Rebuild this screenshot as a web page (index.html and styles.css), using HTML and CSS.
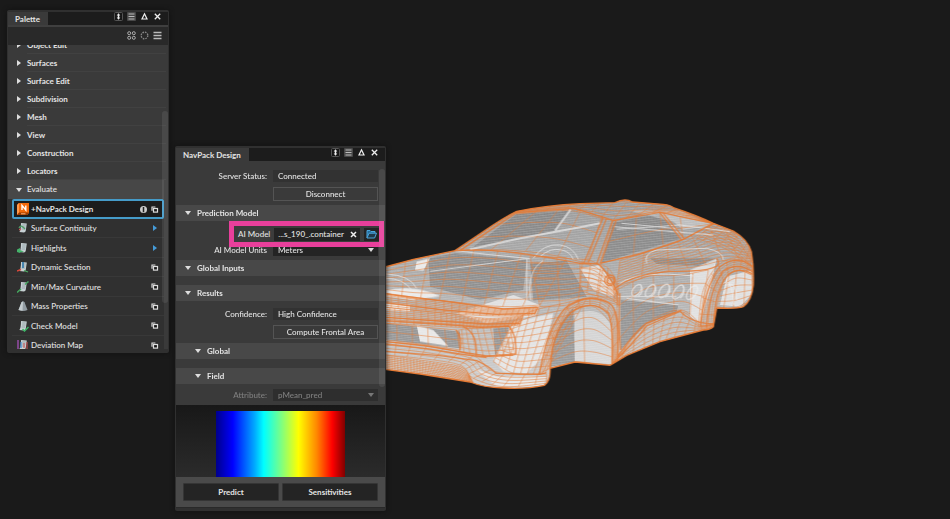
FILE: index.html
```
<!DOCTYPE html>
<html lang="en">
<head>
<meta charset="UTF-8">
<title>NavPack Design</title>
<link rel="stylesheet" href="styles.css">
</head>
<body>
<svg class="sprite" aria-hidden="true">
    <symbol id="i-pin" viewBox="0 0 9 9"><rect x=".5" y=".5" width="8" height="8" rx="1" fill="#171717" stroke="#555"/><path d="M4.5 1.2 6.3 3.6H5.2V5.4H6.3L4.5 7.8 2.7 5.4H3.8V3.6H2.7Z" fill="#eee"/></symbol>
    <symbol id="i-list" viewBox="0 0 9 9"><rect width="9" height="9" rx="1" fill="#484848"/><path d="M1.5 2h6M1.5 4.5h6M1.5 7h6" stroke="#bbb"/></symbol>
    <symbol id="i-up" viewBox="0 0 9 9"><path d="M4.5 1.8 7 7H2Z" fill="none" stroke="#eee" stroke-width="1.2"/></symbol>
    <symbol id="i-close" viewBox="0 0 9 9"><path d="M1.8 1.8 7.2 7.2M7.2 1.8 1.8 7.2" stroke="#eee" stroke-width="1.3"/></symbol>
    <symbol id="i-copy" viewBox="0 0 9 9"><path d="M5.4 2H2v3.8" fill="none" stroke="#ddd" stroke-width="1.2"/><rect x="3.5" y="3.5" width="4" height="3.6" fill="#171717" stroke="#ddd" stroke-width="1.2"/></symbol>
    <symbol id="i-page" viewBox="0 0 12 12"><path d="M4 1 9.8 1.4 8.8 8.5Q8.6 10.6 6.8 10.6L2.4 10Q4 7.500 4 1Z" fill="#c6d0d3"/><path d="M5.200 3h3.600M5 5h3.600M4.600 7h3.600" stroke="#8a9aa0" stroke-width=".8"/></symbol>
</svg>

<main class="viewport">
    <svg class="car" viewBox="0 0 1200 630" role="img" aria-label="Car model wireframe">
        <defs>
            <pattern id="fine" width="9" height="7" patternUnits="userSpaceOnUse" patternTransform="rotate(-6)">
                <path d="M0 1H9" stroke="#f4f4f4" stroke-width="1.600"/><path d="M1 0V7" stroke="#ddd" stroke-width=".8"/>
            </pattern>
            <linearGradient id="shell" x1="0" y1="0" x2="0" y2="1">
                <stop offset="0" stop-color="#989898"/><stop offset=".45" stop-color="#b0b0b0"/><stop offset="1" stop-color="#d4d4d4"/>
            </linearGradient>
            <clipPath id="outline"><path d="M15 231 100 208 225 182 310 125Q370 83 410 64 500 46 600 41L705 38Q735 22 757 36L850 43Q874 46 880 53 950 76 1000 100L1060 123Q1103 148 1114 185 1122 230 1120 285 1115 333 1090 350 1072 357 1010 354L1000 410Q990 419 970 420L840 455 740 496 690 526 585 516 510 535Q512 573 493 586 440 598 370 594 310 592 270 576L120 552 15 538Z"/></clipPath>
        </defs>
        <g clip-path="url(#outline)">
            <rect width="1200" height="630" fill="url(#shell)"/>
            <g class="dark">
                <path d="M145 205 225 190 440 208 430 300 300 330 150 290Z"/>
                <path d="M270 178 410 72 570 62 525 122Z"/>
                <path d="M450 220 560 212 620 320 460 332Z"/>
                <path d="M700 98 840 70 900 146 665 218Z"/>
                <path d="M18 400 240 425 240 475 18 450Z"/>
                <path d="M340 415 385 412 392 490 345 495Z"/>
                <path d="M512 530Q515 410 580 355L584 516Z"/>
                <path d="M722 330 895 345 890 365 800 402 722 480Z"/>
                <path d="M810 205 1010 205 1000 230 830 222Z"/>
            </g>
            <g class="light">
                <path d="M585 372Q670 340 697 420V522L585 514Z" opacity=".5"/>
                <path d="M105 240 110 215 150 205 130 242Z"/>
                <path d="M20 300Q110 285 180 318L100 330 18 318Z"/>
                <path d="M18 340 90 345 90 365 18 360Z"/>
                <path d="M110 405 160 420 205 468 120 455Z"/>
                <path d="M230 370 400 315 480 345 465 378 320 400Z" opacity=".8"/>
                <path d="M400 395 520 370 490 500 440 550 370 545 340 510Z" opacity=".8"/>
                <path d="M600 235 660 225 710 300 700 320 640 300Z" opacity=".8"/>
                <path d="M930 240 1010 205 990 300 960 400 930 380Z" opacity=".8"/>
                <path d="M1040 260 1115 240 1118 310 1080 350 1020 345Z" opacity=".8"/>
                <path d="M280 535 350 558 500 560 490 588 350 590Z" opacity=".8"/>
                <path d="M740 60 900 62 1000 105 910 120 880 95Z" opacity=".4"/>
            </g>
            <rect width="1200" height="630" fill="url(#fine)" opacity=".35"/>
            <g class="wires" id="wires"></g>
            <g class="ribs">
                <path d="M270 178 420 145 600 112 660 100M525 122 572 58" stroke-width="6"/>
                <path d="M225 182 330 194 450 206M150 244 440 206M440 205V330M452 330Q440 240 490 212"/>
                <path d="M460 205Q490 160 540 165 580 170 595 208M480 200Q510 172 545 180 570 185 580 208"/>
                <path d="M710 118 900 105 1050 125M725 100 890 116M700 110 1000 135"/>
                <path d="M800 220Q790 190 830 180L980 175Q1030 185 1030 210M720 280Q780 240 940 258M715 320H890M740 325 895 345"/>
                <path d="M18 252Q90 255 110 295M18 265Q70 265 95 300M1040 285Q1070 270 1070 330M1030 280Q1055 260 1062 345"/>
                <g stroke-width="4">
                    <ellipse cx="770" cy="301" rx="11" ry="20" transform="rotate(35 770 301)"/>
                    <ellipse cx="811" cy="302" rx="11" ry="21" transform="rotate(35 811 302)"/>
                    <ellipse cx="852" cy="303" rx="12" ry="23" transform="rotate(35 852 303)"/>
                    <ellipse cx="895" cy="306" rx="12" ry="24" transform="rotate(35 895 306)"/>
                    <ellipse cx="936" cy="308" rx="12" ry="24" transform="rotate(35 936 308)"/>
                    <path d="M782 284Q795 305 774 320M823 284Q835 305 814 320M866 285Q878 305 855 322M908 287Q920 308 900 325"/>
                </g>
            </g>
            <g class="seams">
                <path d="M225 182Q340 176 450 194T600 220L655 222Q690 250 715 315"/>
                <path d="M240 182 410 68 580 55 665 80 700 92 840 67 1000 100"/>
                <path d="M670 82 612 218M680 85 625 218M698 90 650 222M708 93 662 220"/>
                <path d="M838 66 905 150M848 68 913 146M660 220 780 192 910 148 1000 100"/>
                <path d="M18 312 190 333 370 357 475 352 465 370 350 373 190 360 18 338"/>
                <path d="M18 382 180 393 320 402 420 400M18 392 180 402 310 412"/>
                <path d="M18 455 140 468 240 485 320 498 400 495M18 462 140 476 240 492 320 503"/>
                <path d="M18 484 180 497 290 512Q330 530 348 550L480 553 500 548"/>
                <path d="M228 420Q250 445 240 480M250 410Q295 430 288 498M300 412 385 408Q410 430 408 492L300 500"/>
                <path d="M478 552Q500 420 555 355 630 300 695 345 722 380 712 512M510 535Q515 430 575 365 640 325 685 370 700 400 697 522"/>
                <path d="M962 408Q975 290 1020 230 1070 192 1118 230M980 410Q988 300 1030 243 1070 215 1118 245M1000 408Q1005 300 1045 253 1080 230 1117 252"/>
                <path d="M700 518Q760 460 800 408L900 364Q935 400 1000 402M712 500Q760 430 798 400L905 360"/>
                <path d="M720 310Q715 400 722 480M700 300Q760 245 900 244T1010 205"/>
                <circle cx="690" cy="271" r="16"/><circle cx="692" cy="272" r="10"/>
            </g>
        </g>
        <path class="edge" d="M15 231 100 208 225 182 310 125Q370 83 410 64 500 46 600 41L705 38Q735 22 757 36L850 43Q874 46 880 53 950 76 1000 100L1060 123Q1103 148 1114 185 1122 230 1120 285 1115 333 1090 350 1072 357 1010 354L1000 410Q990 419 970 420L840 455 740 496 690 526 585 516 510 535Q512 573 493 586 440 598 370 594 310 592 270 576L120 552 15 538"/>
    </svg>

    <section class="window palette">
        <header class="titlebar">
            <h2 class="tab">Palette</h2>
            <div class="controls">
                <button type="button" aria-label="Dock"><svg><use href="#i-pin"/></svg></button>
                <button type="button" aria-label="Menu"><svg><use href="#i-list"/></svg></button>
                <button type="button" aria-label="Collapse"><svg><use href="#i-up"/></svg></button>
                <button type="button" aria-label="Close"><svg><use href="#i-close"/></svg></button>
            </div>
        </header>
        <div class="toolbar">
            <button type="button" aria-label="Icon view"><svg viewBox="0 0 9 9" fill="none" stroke="#bbb" stroke-width=".9"><circle cx="2.200" cy="2.200" r="1.500"/><circle cx="6.800" cy="2.200" r="1.500"/><circle cx="2.200" cy="6.800" r="1.500"/><circle cx="6.800" cy="6.800" r="1.500"/></svg></button>
            <button type="button" aria-label="Ring view"><svg viewBox="0 0 9 9"><circle cx="4.500" cy="4.500" r="3.300" fill="none" stroke="#888" stroke-width="1.300" stroke-dasharray="1.600 1"/></svg></button>
            <button type="button" aria-label="List view"><svg viewBox="0 0 9 9"><path d="M.5 1.500h8M.5 4.500h8M.5 7.500h8" stroke="#bbb" stroke-width="1.300"/></svg></button>
        </div>
        <div class="tree">
            <ul class="groups">
                <li>Object Edit</li>
                <li>Surfaces</li>
                <li>Surface Edit</li>
                <li>Subdivision</li>
                <li>Mesh</li>
                <li>View</li>
                <li>Construction</li>
                <li>Locators</li>
                <li class="open">Evaluate</li>
            </ul>
            <ul class="tools">
                <li class="selected">
                    <svg class="tool-icon" viewBox="0 0 12 12"><path d="M0 2 2 0H12V10L10 12H0Z" fill="#f26a0c"/><path d="M0 2 2 0V10L0 12Z" fill="#ff9a4d"/><path d="M2 9.500H12L10 12H0Z" fill="#9c3c00"/><path d="M5 7V2.400L8.800 7V2.400" fill="none" stroke="#fff" stroke-width="1.400"/><path d="M4 10.800h4.500" stroke="#ffb27a"/></svg>
                    <span>+NavPack Design</span>
                    <svg class="mark" viewBox="0 0 9 9"><circle cx="4.500" cy="4.500" r="3.500" fill="#ccc"/><path d="M4.500 2V7.200" stroke="#222" stroke-width="1.500"/></svg>
                    <svg class="mark"><use href="#i-copy"/></svg>
                </li>
                <li>
                    <svg class="tool-icon" viewBox="0 0 12 12"><use href="#i-page"/><path d="M2 6Q4 2 8 7" fill="none" stroke="#4f9c68" stroke-width="1.300"/><path d="M2 7.500h2" stroke="#c55" stroke-width="1.500"/></svg>
                    <span>Surface Continuity</span><i class="more"></i>
                </li>
                <li>
                    <svg class="tool-icon" viewBox="0 0 12 12"><use href="#i-page"/><path d="M0 7.500 3 6V11L0 10ZM3 8l4 1.500-4 1" fill="#45b36b"/></svg>
                    <span>Highlights</span><i class="more"></i>
                </li>
                <li>
                    <svg class="tool-icon" viewBox="0 0 12 12"><use href="#i-page"/><path d="M6 1V7" stroke="#3b7fae" stroke-width="1.800"/><path d="M0 10 4 8.500" stroke="#d9483b" stroke-width="1.500"/><path d="M7 9.500 11 11" stroke="#4fae64" stroke-width="1.300"/></svg>
                    <span>Dynamic Section</span><svg class="mark"><use href="#i-copy"/></svg>
                </li>
                <li>
                    <svg class="tool-icon" viewBox="0 0 12 12"><use href="#i-page"/><path d="M0 11.500 4 8M8 3.500 11.500 .5" stroke="#45a65e" stroke-width="1.500"/></svg>
                    <span>Min/Max Curvature</span><svg class="mark"><use href="#i-copy"/></svg>
                </li>
                <li>
                    <svg class="tool-icon" viewBox="0 0 12 12"><path d="M4.500 2.200Q6 .3 7.500 2.200L10.500 10Q6 12.200 1.500 10Z" fill="#929ca2"/><path d="M4.500 2.200 6 1.600 5.500 10.800 1.500 10Z" fill="#c4cccf"/></svg>
                    <span>Mass Properties</span><svg class="mark"><use href="#i-copy"/></svg>
                </li>
                <li>
                    <svg class="tool-icon" viewBox="0 0 12 12"><use href="#i-page"/><path d="M5.500 9 7.500 11 11.500 7" fill="none" stroke="#3db566" stroke-width="1.500"/></svg>
                    <span>Check Model</span><svg class="mark"><use href="#i-copy"/></svg>
                </li>
                <li>
                    <svg class="tool-icon" viewBox="0 0 12 12"><use href="#i-page"/><path d="M1 1V11" stroke="#a651ba" stroke-width="1.300"/><path d="M4 3v6" stroke="#438ad0" stroke-width="1.200"/><path d="M7 4v5M10 3v8" stroke="#ce4f52"/></svg>
                    <span>Deviation Map</span><svg class="mark"><use href="#i-copy"/></svg>
                </li>
            </ul>
            <div class="scroll"></div>
        </div>
    </section>

    <section class="window navpack">
        <header class="titlebar">
            <h2 class="tab">NavPack Design</h2>
            <div class="controls">
                <button type="button" aria-label="Dock"><svg><use href="#i-pin"/></svg></button>
                <button type="button" aria-label="Menu"><svg><use href="#i-list"/></svg></button>
                <button type="button" aria-label="Collapse"><svg><use href="#i-up"/></svg></button>
                <button type="button" aria-label="Close"><svg><use href="#i-close"/></svg></button>
            </div>
        </header>
        <form class="form">
            <div class="rows">
                <div class="row"><label for="status">Server Status:</label><input id="status" value="Connected" readonly></div>
                <div class="row"><button type="button" class="outline">Disconnect</button></div>
            </div>
            <h3>Prediction Model</h3>
            <div class="rows model">
                <div class="row"><label for="units">AI Model Units</label><select id="units"><option>Meters</option></select></div>
                <div class="callout">
                    <label for="model">AI Model</label>
                    <div class="file">
                        <input id="model" value="...s_190_.container" readonly>
                        <button type="button" aria-label="Clear"><svg viewBox="0 0 9 9"><path d="M2 2 7 7M7 2 2 7" stroke="#eee" stroke-width="1.500"/></svg></button>
                    </div>
                    <button type="button" class="browse" aria-label="Browse"><svg viewBox="0 0 11 10"><path d="M1 9V1.500H4L5 2.500H9V4" fill="#256d9c" stroke="#4ba6dc"/><path d="M1 9 3 4.200H10.500L8.600 9Z" fill="#20394a" stroke="#4ba6dc"/></svg></button>
                </div>
            </div>
            <h3>Global Inputs</h3>
            <h3 class="spaced">Results</h3>
            <div class="rows results">
                <div class="row"><label for="confidence">Confidence:</label><input id="confidence" value="High Confidence" readonly></div>
                <div class="row"><button type="button" class="outline">Compute Frontal Area</button></div>
            </div>
            <h3 class="sub">Global</h3>
            <h3 class="sub spaced">Field</h3>
            <div class="rows field">
                <div class="row"><label for="attribute">Attribute:</label><select id="attribute" disabled><option>pMean_pred</option></select></div>
            </div>
            <div class="legend"><div class="ramp"></div></div>
            <div class="scroll"></div>
        </form>
        <footer class="actions">
            <button type="button">Predict</button>
            <button type="button">Sensitivities</button>
        </footer>
    </section>
</main>
<script src="script.js"></script>
</body>
</html>
```
FILE: styles.css
```
* {
    margin: 0;
    padding: 0;
    box-sizing: border-box;
}

body {
    background: #1a1a1a;
    color: #e4e4e4;
    font: 500 8px/12px Lato, "Noto Sans", sans-serif;
}

button, input, select {
    font: inherit;
    color: inherit;
    border: 0;
    border-radius: 0;
    background: none;
    min-width: 0;
}

ul {
    list-style: none;
}

.sprite {
    display: none;
}

.viewport {
    position: relative;
    height: 100vh;
    overflow: hidden;
}

/* car */
.car {
    position: absolute;
    left: 380px;
    top: 190px;
    width: 400px;
}
.dark { fill: #777; opacity: .55; }
.light { fill: #f2f2f2; opacity: .9; }
.ribs { fill: none; stroke: #f0f0f0; stroke-width: 3; opacity: .65; }
.wires { fill: none; stroke: #e57f3a; stroke-width: 2; opacity: .8; }
.seams { fill: none; stroke: #e57a34; stroke-width: 4; opacity: .8; }
.edge { fill: none; stroke: #e57a34; stroke-width: 4; }

/* windows */
.window {
    position: absolute;
    display: flex;
    flex-direction: column;
    background: #3a3a3a;
    border: 1px solid #303030;
    border-radius: 2px;
    box-shadow: 0 0 5px #111;
}
.palette {
    left: 7px;
    top: 10px;
    width: 162px;
    height: 343px;
    border-bottom: 4px solid #303030;
}
.navpack {
    left: 175px;
    top: 146px;
    width: 211px;
    border-bottom: 3px solid #303030;
}
.titlebar {
    display: flex;
    justify-content: space-between;
    height: 14px;
    background: #1c1c1c;
    border-top: 1px solid #303030;
}
.tab {
    padding: 0 8px 0 7px;
    background: #3a3a3a;
    font-size: 8px;
    line-height: 15px;
    font-weight: 700;
}
.controls {
    display: flex;
    gap: 4px;
    padding: 0 6px 0 0;
}
.controls button, .controls svg {
    display: block;
    width: 9px;
    height: 9px;
}

/* palette */
.toolbar {
    display: flex;
    justify-content: flex-end;
    align-items: center;
    gap: 4px;
    height: 20px;
    padding: 0 6px 2px 0;
    border-top: 2px solid #3f3f3f;
    background: #292929;
}
.toolbar button, .toolbar svg {
    display: block;
    width: 9px;
    height: 9px;
}
.tree {
    position: relative;
    flex: 1;
    overflow: hidden;
}
.groups {
    margin-top: -9px;
}
.groups li {
    height: 18px;
    padding-left: 19px;
    line-height: 18px;
    font-weight: 700;
    background: linear-gradient(#414141, #414141) 19px 100% / 139px 1px no-repeat;
}
.groups li::before {
    content: "";
    float: left;
    margin: 6px 0 0 -10px;
    border: 3px solid transparent;
    border-left: 4px solid #ddd;
    border-right: 0;
}
.groups .open {
    height: 19px;
    line-height: 19px;
    background: #474747;
    margin-right: 4px;
    font-weight: 500;
}
.groups .open::before {
    margin: 8px 0 0 -11px;
    border: 3px solid transparent;
    border-top: 4px solid #ddd;
    border-bottom: 0;
}
.tools {
    background: #303030;
    margin-right: 4px;
    padding-left: 4px;
}
.tools li {
    display: flex;
    align-items: center;
    gap: 2px;
    height: 20px;
    padding: 0 5px;
    border-bottom: 1px solid #383838;
}
.tools li:nth-child(even) {
    height: 19px;
}
.tools span {
    flex: 1;
}
.tools .selected {
    border: 2px solid #459bc8;
    border-radius: 2px;
    padding: 0 3px;
    background: #1c1c1c;
    font-weight: 700;
}
.tool-icon {
    width: 12px;
    height: 12px;
}
.mark {
    width: 9px;
    height: 9px;
}
.more {
    margin-right: 2px;
    border: 3px solid transparent;
    border-left: 4px solid #459bd8;
    border-right: 0;
}
.scroll {
    position: absolute;
    right: 0;
    top: 8px;
    bottom: 90px;
    width: 6px;
    border-radius: 3px;
    background: #fff;
    opacity: .08;
}
.palette .scroll {
    top: 66px;
    bottom: 46px;
}

/* NavPack Design */
.form {
    position: relative;
}
.rows {
    position: relative;
    display: grid;
    gap: 5px;
    padding: 9px 7px 4px 0;
}
.row {
    display: grid;
    grid-template-columns: 91px 1fr;
    column-gap: 6px;
}
.row label {
    text-align: right;
}
.row input, .row select {
    height: 12px;
    padding: 0 5px;
    background: #323232;
    appearance: none;
}
.row .outline {
    grid-column: 2;
    height: 14px;
    border: 1px solid #545454;
    line-height: 12px;
}
.form h3 {
    padding-left: 21px;
    height: 16px;
    background: #484848;
    font-size: 8px;
    line-height: 16px;
    font-weight: 700;
}
.form h3::before {
    content: "";
    float: left;
    margin: 6px 0 0 -12px;
    border: 3px solid transparent;
    border-top: 4px solid #ddd;
    border-bottom: 0;
}
.form .sub {
    padding-left: 31px;
}
.form .spaced {
    margin-top: 9px;
}
.row select {
    background: url("data:image/svg+xml,%3Csvg xmlns='http://www.w3.org/2000/svg' width='6' height='4'%3E%3Cpath d='M0 0H6L3 4Z' fill='%23ddd'/%3E%3C/svg%3E") right 4px center no-repeat #242424;
}
.row select:disabled {
    color: #808080;
    opacity: 1;
    background-color: #2e2e2e;
    background-image: url("data:image/svg+xml,%3Csvg xmlns='http://www.w3.org/2000/svg' width='6' height='4'%3E%3Cpath d='M0 0H6L3 4Z' fill='%23777'/%3E%3C/svg%3E");
}
.form .model {
    padding-top: 23px;
}
.callout {
    position: absolute;
    left: 53px;
    right: 1px;
    top: 0;
    height: 26px;
    display: flex;
    align-items: center;
    gap: 4px;
    padding-left: 4px;
    border: 5px solid #e83f9b;
    background: #3c3c3c;
}
.callout label {
    white-space: nowrap;
}
.file {
    display: flex;
    align-items: center;
    flex: 1;
    min-width: 0;
    height: 13px;
    background: #242424;
}
.file input {
    flex: 1;
    width: 0;
    padding-left: 4px;
}
.file button {
    width: 13px;
}
.file svg {
    display: block;
    width: 9px;
    height: 9px;
    margin: auto;
}
.browse {
    width: 15px;
    height: 13px;
    background: #242424;
}
.browse svg {
    display: block;
    width: 11px;
    height: 10px;
    margin: auto;
}
.form .results {
    padding-top: 7px;
}
.form .field {
    padding-top: 5px;
}
.field label {
    color: #808080;
}
.legend {
    height: 72px;
    padding: 6px 40px 0;
    background: linear-gradient(#181818, #2b2b2b);
}
.ramp {
    height: 66px;
    background: linear-gradient(to right, #00008b, #00f 13%, #0af 30%, #0ff 37%, #7f8 50%, #ff0 64%, #f80 78%, #f00 90%, #800000);
}
.actions {
    display: grid;
    grid-template-columns: 1fr 1fr;
    gap: 3px;
    padding: 6px 7px;
    border-bottom: 1px solid #292929;
    background: #4a4a4a;
}
.actions button {
    height: 18px;
    border: 1px solid #353535;
    border-radius: 1px;
    background: #242424;
    font-weight: 700;
}
```
FILE: script.js
```
// each patch: two opposite edges, lines along, lines across
const patches = [
    // hood
    [[[18,230],[120,205],[225,182],[340,182],[450,196],[560,204]], [[18,310],[100,325],[190,332],[300,345],[390,350],[480,345]], 7, 8],
    // windshield
    [[[410,64],[500,56],[580,55],[665,82]], [[240,180],[370,180],[500,192],[620,220]], 3, 4],
    // roof
    [[[410,64],[600,41],[740,36],[880,52],[1000,100]], [[410,72],[570,62],[700,90],[840,65],[1000,100]], 4, 14],
    // side glass
    [[[700,92],[770,75],[840,67],[900,80],[995,100]], [[660,220],[760,195],[850,170],[910,148],[1000,103]], 2, 4],
    // rear quarter
    [[[720,212],[850,170],[910,148],[1000,103],[1060,125]], [[710,290],[850,245],[950,230],[1040,210],[1116,215]], 10, 7],
    [[[1000,100],[1050,122],[1095,150],[1112,190]], [[950,145],[1010,165],[1060,190],[1112,230]], 7, 8],
    // grille
    [[[18,310],[200,335],[360,355],[470,350]], [[18,352],[200,370],[350,378],[465,375]], 7, 22],
    [[[18,352],[200,370],[320,385],[430,378]], [[18,400],[200,410],[310,415],[420,405]], 8, 30],
    [[[18,400],[120,410],[230,420]], [[18,450],[120,462],[240,480]], 2, 5],
    [[[235,420],[300,412],[390,410]], [[240,485],[320,500],[405,495]], 5, 9],
    // corner
    [[[400,395],[450,365],[540,342],[620,325]], [[340,515],[400,550],[460,552],[495,550]], 10, 9],
    // lip
    [[[18,455],[140,468],[280,497],[330,540],[400,552],[500,552]], [[18,495],[120,505],[240,525],[280,565],[370,590],[500,580]], 4, 15],
    [[[18,495],[120,510],[240,530],[270,560]], [[18,538],[120,552],[200,562],[280,578]], 8, 36],
    // front arch
    [[[480,550],[510,430],[560,350],[630,322],[690,340],[715,400],[710,500]], [[510,535],[525,450],[570,370],[630,345],[680,370],[697,420],[697,520]], 4, 12],
    // front fender
    [[[450,200],[560,205],[650,220],[710,300]], [[480,350],[560,345],[630,325],[715,345]], 9, 4],
    [[[600,218],[655,222],[690,240],[715,290]], [[600,300],[640,315],[690,325],[715,345]], 6, 5],
    // wheel housing
    [[[520,430],[580,365],[640,350],[695,400]], [[512,535],[585,516],[640,520],[695,525]], 5, 2],
    // door
    [[[710,300],[800,260],[900,255],[985,240]], [[715,500],[800,400],[900,360],[960,400]], 4, 5],
    // sill
    [[[720,490],[800,405],[900,365],[960,405],[1000,400]], [[700,520],[800,470],[870,445],[960,422],[1000,412]], 5, 13],
    // rear arch and wheel
    [[[955,410],[970,300],[1015,225],[1075,203],[1115,225]], [[1000,405],[1010,320],[1030,270],[1070,240],[1117,255]], 6, 10],
    [[[1030,270],[1070,242],[1115,255]], [[1010,350],[1060,354],[1118,330]], 5, 4]
];

function pointAt(edge, t) {
    const p = t * (edge.length - 1);
    const i = Math.min(Math.floor(p), edge.length - 2);
    const f = p - i;
    const a = edge[Math.max(i - 1, 0)], b = edge[i], c = edge[i + 1], d = edge[Math.min(i + 2, edge.length - 1)];
    return [0, 1].map(k => 0.5 * (2 * b[k] + (c[k] - a[k]) * f
        + (2 * a[k] - 5 * b[k] + 4 * c[k] - d[k]) * f * f
        + (3 * b[k] - a[k] - 3 * c[k] + d[k]) * f * f * f));
}

let d = "";
for (const [top, bottom, along, across] of patches) {
    for (let r = 0; r <= along; r++) {
        for (let s = 0; s <= 30; s++) {
            const a = pointAt(top, s / 30), b = pointAt(bottom, s / 30), m = r / along;
            d += (s ? "L" : "M") + (a[0] + (b[0] - a[0]) * m).toFixed(1) + " " + (a[1] + (b[1] - a[1]) * m).toFixed(1);
        }
    }
    for (let c = 0; c <= across; c++) {
        const a = pointAt(top, c / across), b = pointAt(bottom, c / across);
        d += "M" + a.map(Math.round).join(" ") + "L" + b.map(Math.round).join(" ");
    }
}
const path = document.createElementNS("http://www.w3.org/2000/svg", "path");
path.setAttribute("d", d);
document.getElementById("wires").appendChild(path);
```
